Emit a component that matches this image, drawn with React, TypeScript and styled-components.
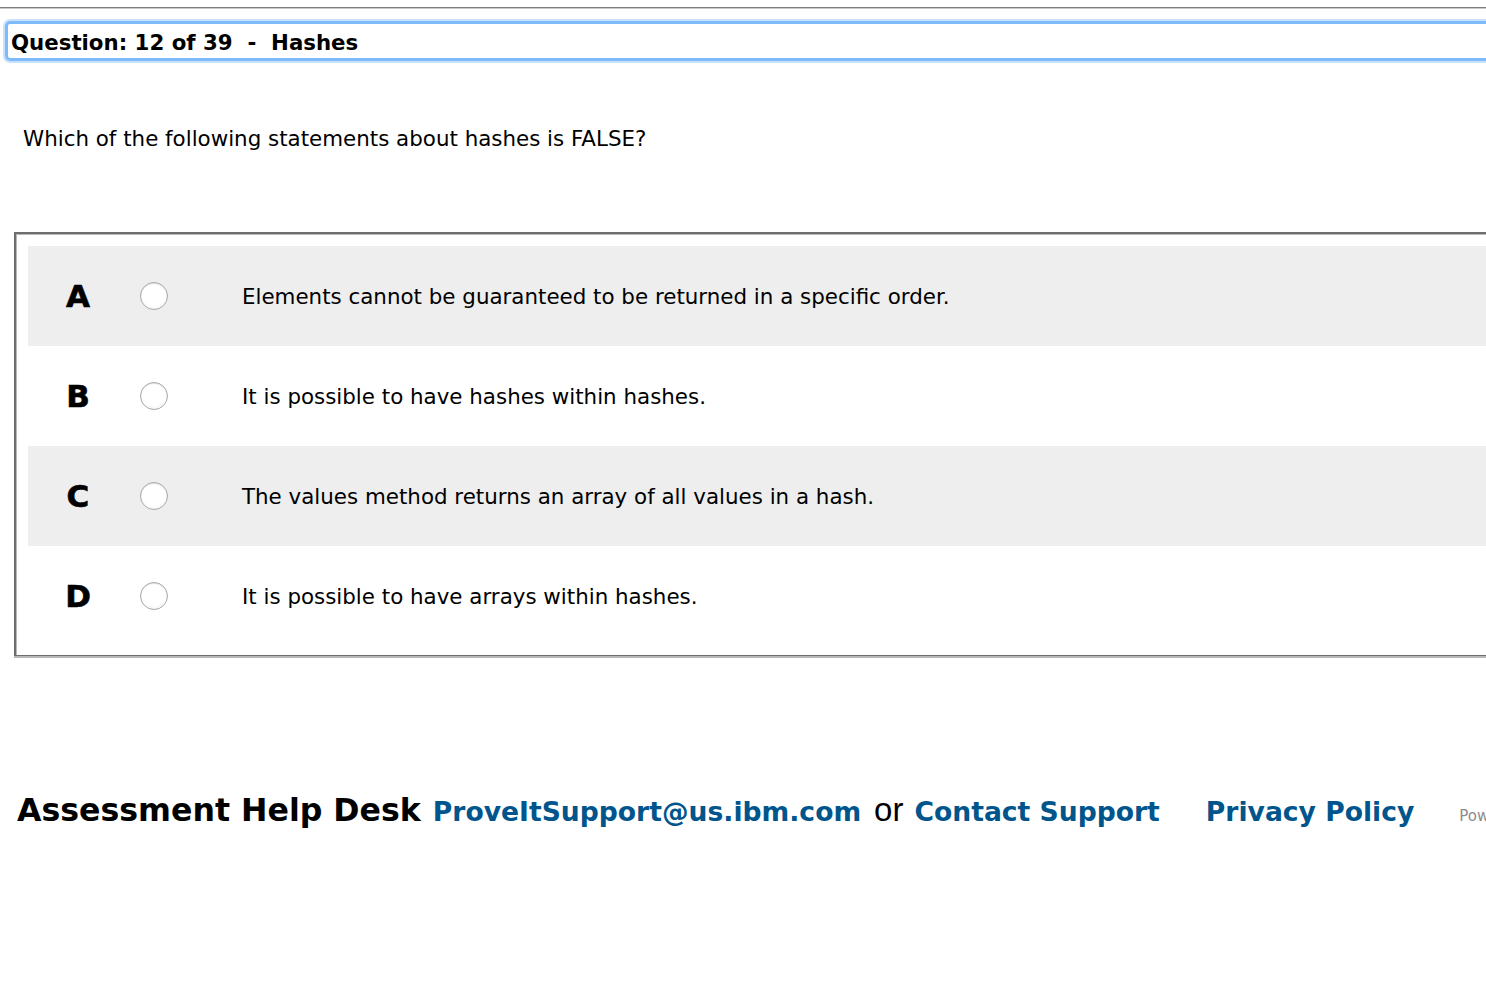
import React from "react";
import styled, { createGlobalStyle } from "styled-components";

const Global = createGlobalStyle`
  html, body { margin: 0; padding: 0; background: #fff; }
  body { font-family: "DejaVu Sans", Verdana, sans-serif; color: #000; overflow: hidden; }
`;

const Page = styled.div`
  width: 1486px;
  height: 990px;
  overflow: hidden;
  position: relative;
`;

const TopRule = styled.div`
  margin-top: 7px;
  height: 1px;
  background: #7d7d82;
  border-bottom: 1px solid #c9c9c9;
`;

const QuestionBar = styled.div`
  box-sizing: border-box;
  margin: 12px 0 0 5px;
  width: 1500px;
  height: 40px;
  border: 3px solid #7fbaf8;
  border-radius: 5px;
  box-shadow: 0 0 0 2px #c8e1fc;
  display: flex;
  align-items: center;
  padding: 2px 0 0 3px;
  font-size: 21.3px;
  font-weight: bold;
  white-space: pre;
`;

const Prompt = styled.p`
  margin: 65px 0 0 23px;
  font-size: 21.4px;
  line-height: 26px;
`;

const Choices = styled.div`
  margin: 80px 0 0 14px;
  width: 1500px;
  border-top: 2px solid #6e6e6e;
  border-left: 2px solid #6e6e6e;
  border-bottom: 1px solid #6e6e6e;
  box-shadow: 0 2px 0 #b8b8b8, inset 1px 1px 0 #b8b8b8;
  padding: 12px 0 9px 12px;
  display: flex;
  flex-direction: column;
`;

const Row = styled.label<{ $shaded: boolean }>`
  height: 100px;
  display: flex;
  align-items: center;
  background: ${(p) => (p.$shaded ? "#eeeeee" : "#ffffff")};
`;

const Letter = styled.span`
  width: 100px;
  text-align: center;
  font-size: 31px;
  font-weight: 900;
  -webkit-text-stroke: 0.6px #000;
`;

const Radio = styled.span`
  box-sizing: border-box;
  width: 28px;
  height: 28px;
  margin-left: 12px;
  border-radius: 50%;
  border: 1px solid #a9a9a9;
  background: radial-gradient(circle at 50% 40%, #ffffff 55%, #f1f1f1 100%);
  box-shadow: inset 0 1px 1px rgba(0, 0, 0, 0.12);
`;

const ChoiceText = styled.span`
  margin-left: 74px;
  font-size: 21.4px;
`;

const Footer = styled.div`
  margin: 135px 0 0 17px;
  display: flex;
  align-items: baseline;
  white-space: nowrap;
  & > * { flex-shrink: 0; }
`;

const HelpTitle = styled.span`
  font-size: 31.6px;
  font-weight: bold;
  margin-right: 12px;
`;

const Link = styled.a`
  font-size: 26.6px;
  font-weight: bold;
  color: #00558c;
  text-decoration: none;
`;

const Or = styled.span`
  font-family: "Liberation Sans", Arial, sans-serif;
  font-size: 33px;
  margin: 0 11px 0 13px;
`;

const Gap = styled.span<{ $w: number }>`
  display: inline-block;
  width: ${(p) => p.$w}px;
`;

const Powered = styled.span`
  font-size: 15px;
  color: #8c8c8c;
`;

const options = [
  "Elements cannot be guaranteed to be returned in a specific order.",
  "It is possible to have hashes within hashes.",
  "The values method returns an array of all values in a hash.",
  "It is possible to have arrays within hashes.",
];

export default function App() {
  return (
    <Page>
      <Global />
      <TopRule />
      <QuestionBar>{"Question: 12 of 39  -  Hashes"}</QuestionBar>
      <Prompt>Which of the following statements about hashes is FALSE?</Prompt>
      <Choices>
        {options.map((o, i) => (
          <Row key={i} $shaded={i % 2 === 0}>
            <Letter>{"ABCD"[i]}</Letter>
            <Radio />
            <ChoiceText>{o}</ChoiceText>
          </Row>
        ))}
      </Choices>
      <Footer>
        <HelpTitle>Assessment Help Desk</HelpTitle>
        <Link href="#">ProveItSupport@us.ibm.com</Link>
        <Or>or</Or>
        <Link href="#">Contact Support</Link>
        <Gap $w={46} />
        <Link href="#">Privacy Policy</Link>
        <Gap $w={45} />
        <Powered>Powered by</Powered>
      </Footer>
    </Page>
  );
}
